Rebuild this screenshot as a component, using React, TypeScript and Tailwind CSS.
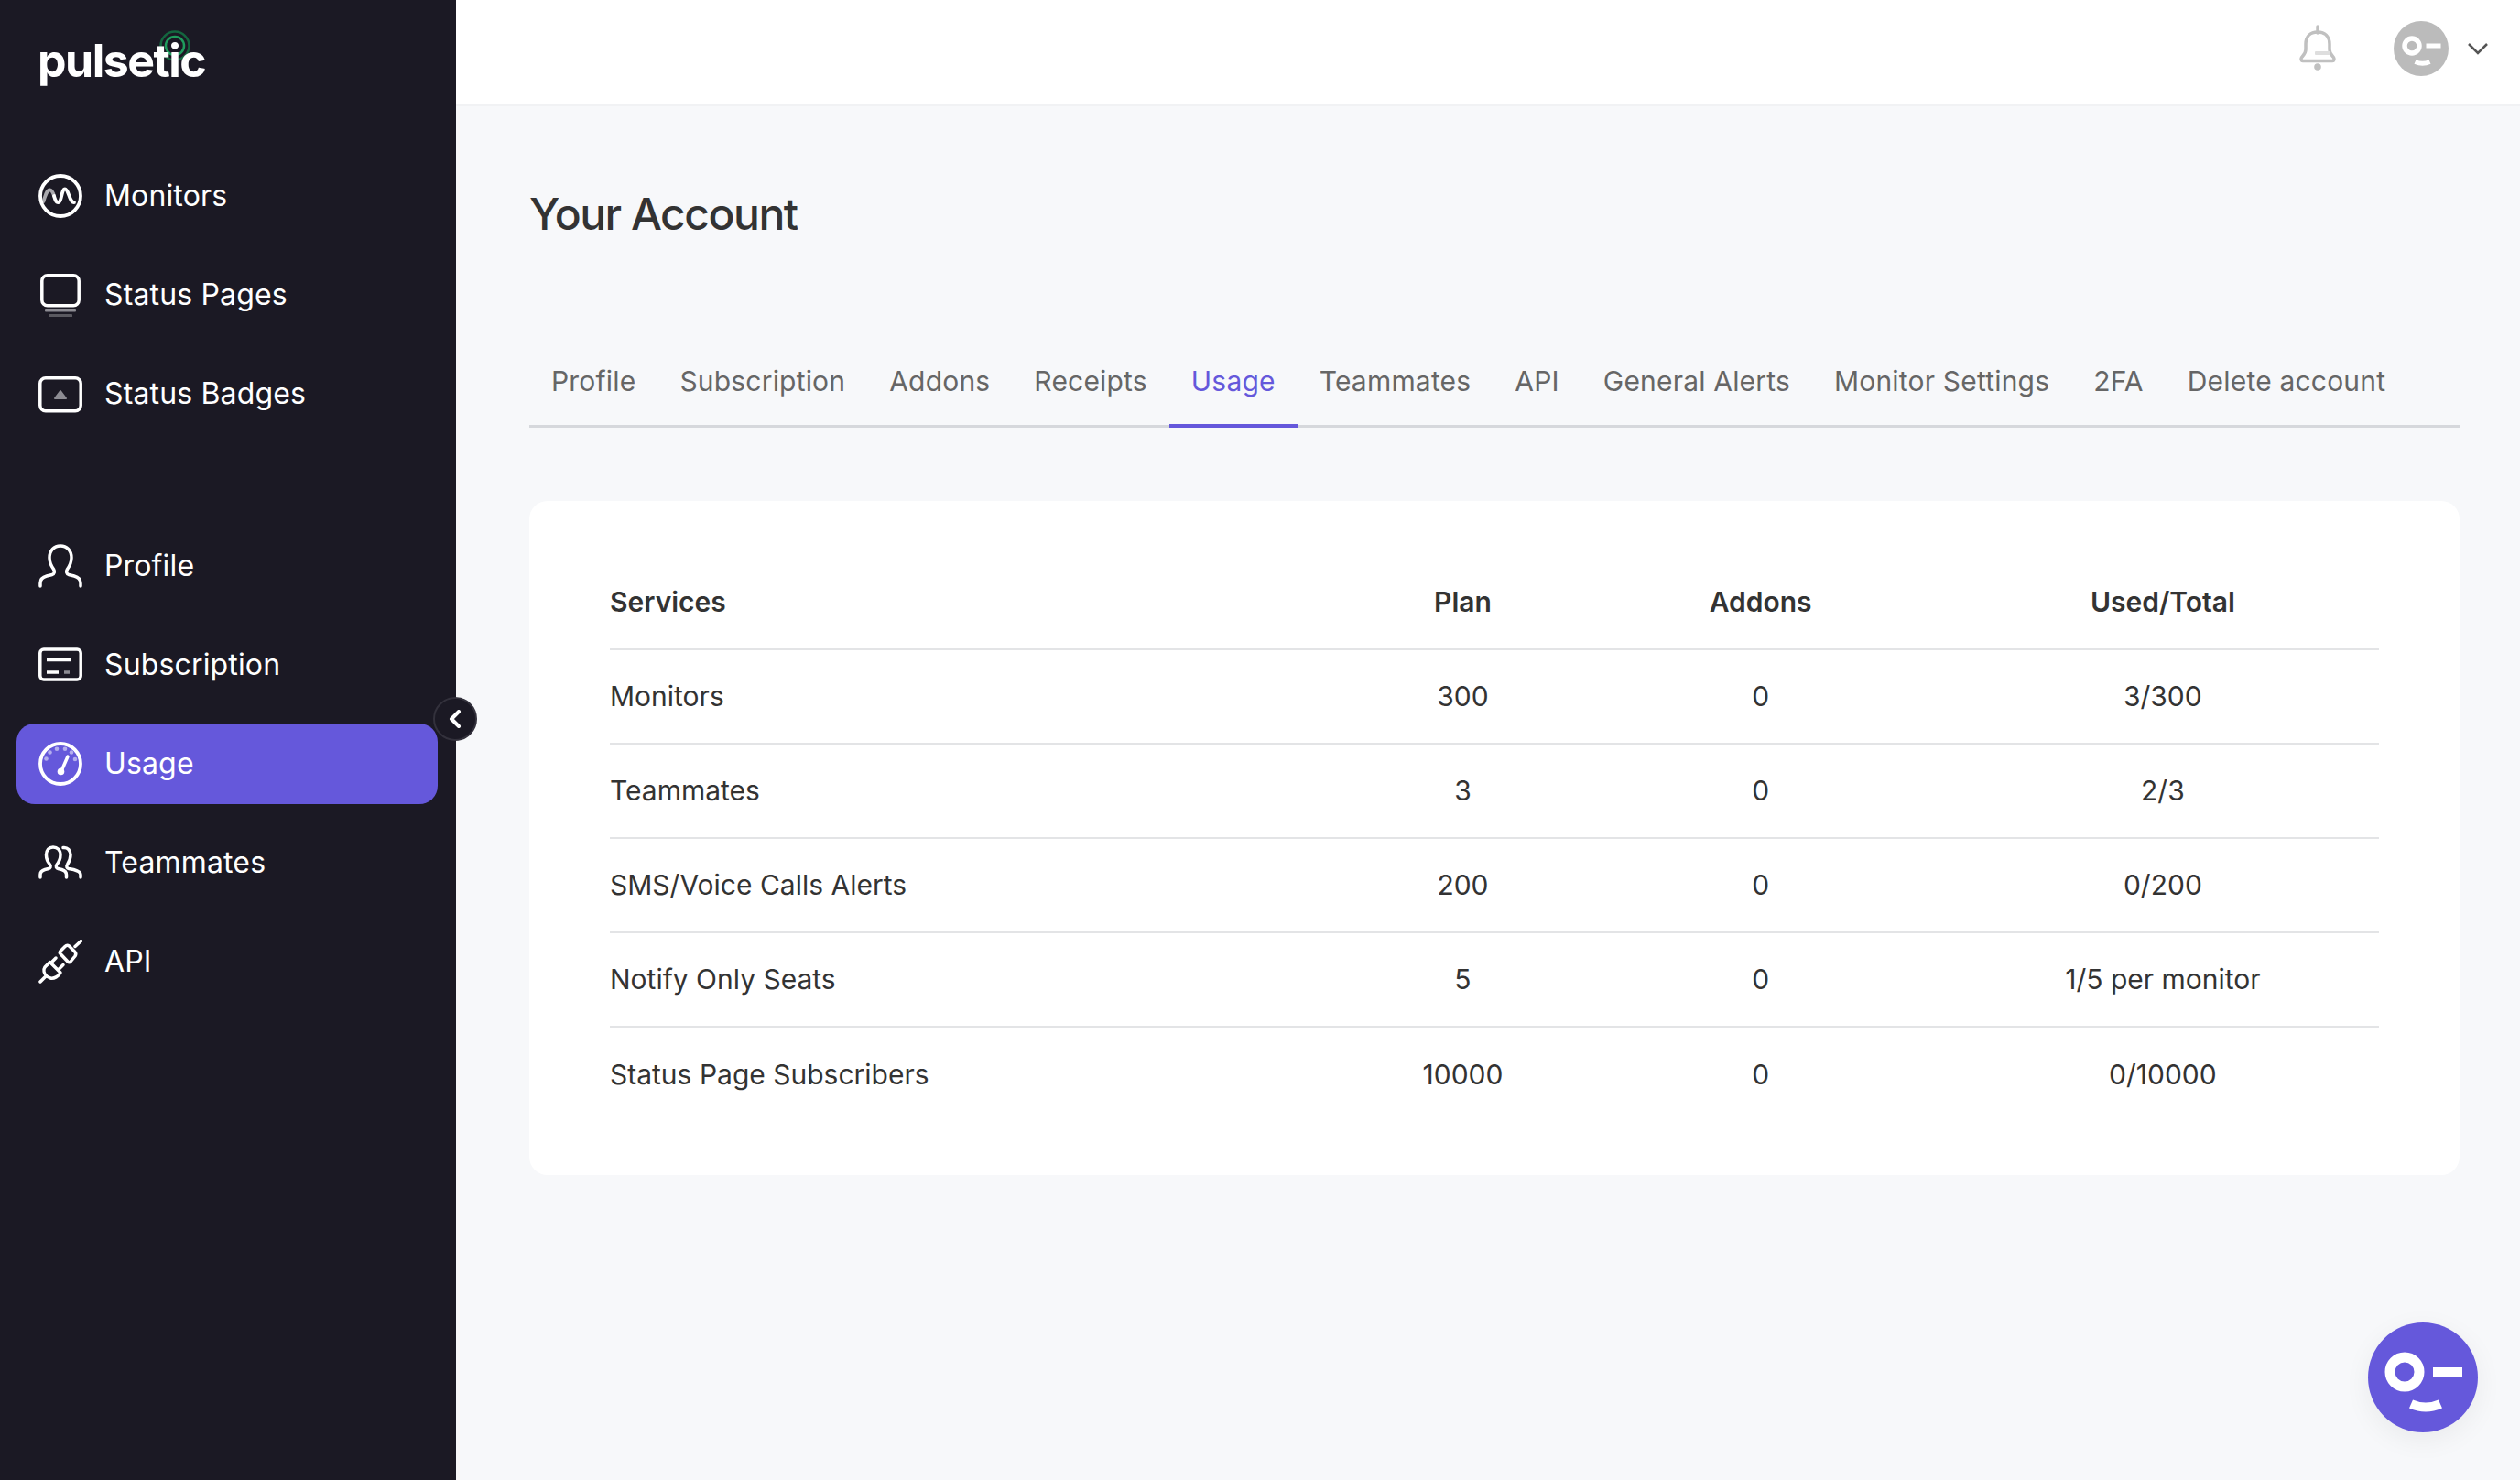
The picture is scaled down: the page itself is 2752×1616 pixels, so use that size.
import React from 'react';

const navTop = [
  { label: 'Monitors', icon: <MonitorIcon /> },
  { label: 'Status Pages', icon: <PagesIcon /> },
  { label: 'Status Badges', icon: <BadgeIcon /> },
];

const navBottom = [
  { label: 'Profile', icon: <ProfileIcon /> },
  { label: 'Subscription', icon: <CardIcon /> },
  { label: 'Usage', icon: <GaugeIcon />, active: true },
  { label: 'Teammates', icon: <TeamIcon /> },
  { label: 'API', icon: <PlugIcon /> },
];

const tabs = ['Profile', 'Subscription', 'Addons', 'Receipts', 'Usage', 'Teammates', 'API', 'General Alerts', 'Monitor Settings', '2FA', 'Delete account'];

const rows = [
  ['Monitors', '300', '0', '3/300'],
  ['Teammates', '3', '0', '2/3'],
  ['SMS/Voice Calls Alerts', '200', '0', '0/200'],
  ['Notify Only Seats', '5', '0', '1/5 per monitor'],
  ['Status Page Subscribers', '10000', '0', '0/10000'],
];

function MonitorIcon() {
  return (
    <svg width="48" height="48" viewBox="0 0 48 48" fill="none" strokeWidth="3.8" strokeLinecap="round">
      <path d="M5.500 30C7.500 23 9 17.500 12.500 17.500C15 17.500 16 21 17 24" stroke="#a9a8ad" />
      <path d="M17 24C18 27.500 19 31 21.500 31C25.500 31 25 16.500 29 16.500C33 16.500 33.500 31 39 31" stroke="#fff" />
      <circle cx="24" cy="24" r="22" stroke="#fff" />
    </svg>
  );
}

function PagesIcon() {
  return (
    <svg width="48" height="48" viewBox="0 0 48 48" fill="none">
      <rect x="3.800" y="2.800" width="40.400" height="33" rx="6" stroke="#fff" strokeWidth="3.500" />
      <rect x="7" y="39" width="34" height="3.500" rx="1" fill="#8d8c93" />
      <rect x="11" y="45" width="26" height="3.500" rx="1" fill="#5a5960" />
    </svg>
  );
}

function BadgeIcon() {
  return (
    <svg width="48" height="48" viewBox="0 0 48 48" fill="none">
      <rect x="1.800" y="6.800" width="44.400" height="36" rx="6" stroke="#fff" strokeWidth="3.500" />
      <path d="M24 21L30 29H18Z" fill="#8d8c93" stroke="#8d8c93" strokeWidth="2" strokeLinejoin="round" />
    </svg>
  );
}

function ProfileIcon() {
  return (
    <svg width="48" height="48" viewBox="0 0 48 48" fill="none" stroke="#fff" strokeWidth="3.500" strokeLinecap="round" strokeLinejoin="round">
      <path d="M2 46V43C2 38 5 36 9 35L15 33.500C17.500 32.500 18 30 16.500 27.500C14 24 12 20 12 15C12 7 17 2 24 2C31 2 36 7 36 15C36 20 34 24 31.500 27.500C30 30 30.500 32.500 33 33.500L39 35C43 36 46 38 46 43V46" />
    </svg>
  );
}

function CardIcon() {
  return (
    <svg width="48" height="48" viewBox="0 0 48 48" fill="none">
      <rect x="1.800" y="7" width="44.400" height="33" rx="4" stroke="#fff" strokeWidth="3.500" />
      <path d="M9 18.500H35" stroke="#fff" strokeWidth="3.500" />
      <path d="M9 32H22" stroke="#fff" strokeWidth="3.500" />
      <path d="M28 32H34" stroke="#8d8c93" strokeWidth="3.500" />
    </svg>
  );
}

function GaugeIcon() {
  return (
    <svg width="48" height="48" viewBox="0 0 48 48" fill="none">
      <circle cx="24" cy="24" r="22" stroke="#fff" strokeWidth="3.800" />
      <g fill="#b4aeee">
        <circle cx="8.500" cy="18.500" r="2.300" />
        <circle cx="12.500" cy="11.500" r="2.300" />
        <circle cx="20" cy="7.800" r="2.300" />
        <circle cx="29" cy="7.800" r="2.300" />
        <circle cx="36" cy="11.500" r="2.300" />
        <circle cx="40" cy="19" r="2.300" />
      </g>
      <path d="M25 32L32 16" stroke="#fff" strokeWidth="3.500" strokeLinecap="round" />
      <circle cx="24.500" cy="32.500" r="3.800" fill="#fff" />
    </svg>
  );
}

function TeamIcon() {
  return (
    <svg width="48" height="48" viewBox="0 0 48 48" fill="none" stroke="#fff" strokeWidth="3.500" strokeLinecap="round" strokeLinejoin="round">
      <path d="M2 40V37C2 34 4 32.500 7 31.500L11 30.500C13 30 14 28 12.500 26C10 23 8.500 19 8.500 15.500C8.500 10 11.500 7 16 7C20.500 7 24 10 24 15.500C24 19 22.500 23 20 26C18.500 28 19.500 30 21.500 30.500L25.500 31.500C28.500 32.500 30.500 34 30.500 37V40" />
      <path d="M27 7.500C32 7 35 10.500 35 15.500C35 19 33.500 23 31.500 26C30 28 31 30 33 30.500L38.500 31.500C42 32.500 46 34 46 37V40" />
    </svg>
  );
}

function PlugIcon() {
  return (
    <svg width="48" height="48" viewBox="0 0 48 48" fill="none" stroke="#fff" strokeWidth="3.500" strokeLinecap="round" strokeLinejoin="round">
      <path d="M46.500 1.500L40 7.500" />
      <path d="M23.500 13L29 7.500C30.500 6 32 6 33.500 7L39.500 13C41 14.500 41 16.500 40 18L35 24C34 25 33 25 32 24L24 15.500C23 14.500 23 14 23.500 13Z" />
      <path d="M12.500 24.500L24 36C22 40 17 43 13 42L9 40C6 37 5 33 7 30Z" />
      <path d="M2 46L7.500 40.500" />
      <path d="M14.500 24.500L19 20M22.500 32L27 27.500" />
    </svg>
  );
}

function BellIcon() {
  return (
    <svg width="40" height="50" viewBox="0 0 40 50" fill="none">
      <path d="M20 2V9" stroke="#c0c0c0" strokeWidth="3.500" strokeLinecap="round" />
      <path d="M2 37C2 34.500 7 33 7 27V21C7 13 12 8 20 8C28 8 33 13 33 21V27C33 33 38 34.500 38 37C38 38.500 37 39.500 36 39.500H4C3 39.500 2 38.500 2 37Z" stroke="#c0c0c0" strokeWidth="3.500" strokeLinejoin="round" />
      <rect x="17" y="29" width="17" height="4" rx="1" fill="#dedede" />
      <circle cx="20" cy="46" r="3.800" fill="#c0c0c0" />
    </svg>
  );
}

function FaceIcon({ size, color }: { size: number; color: string }) {
  return (
    <svg width={size} height={size} viewBox="0 0 120 120">
      <circle cx="60" cy="60" r="60" fill={color} />
      <circle cx="40" cy="54" r="16" fill="none" stroke="#fff" strokeWidth="11" />
      <rect x="71" y="49" width="32" height="10" fill="#fff" />
      <path d="M47 89Q63 96 79 89" fill="none" stroke="#fff" strokeWidth="10" />
    </svg>
  );
}

function NavItem({ label, icon, active }: { label: string; icon: React.ReactNode; active?: boolean }) {
  return (
    <a className={`flex items-center h-[88px] pl-6 gap-6 rounded-[20px] text-[32px] tracking-[0.15px] text-white ${active ? 'bg-[#6558db]' : ''}`}>
      <span className="w-12 h-12 shrink-0">{icon}</span>
      {label}
    </a>
  );
}

export default function App() {
  return (
    <div className="flex h-[1616px] overflow-hidden bg-[#f7f8fa] font-['Inter',sans-serif]">
      {/* Sidebar */}
      <aside className="relative w-[498px] shrink-0 bg-[#1b1924] pl-[18px] pr-5">
        <div className="relative mt-[28px] ml-[23px] h-[142px]">
          <svg className="absolute left-[128px] top-[3px]" width="44" height="44" viewBox="0 0 44 44" fill="none">
            <circle cx="22" cy="19" r="15.500" stroke="#14663f" strokeWidth="2.500" />
            <circle cx="22" cy="19" r="10" stroke="#1f9d5d" strokeWidth="2.500" />
          </svg>
          <span className="relative block text-[50px] leading-[62px] pt-[7px] font-bold tracking-[-1.5px] text-white">pulsetic</span>
        </div>

        <nav className="flex flex-col gap-5">
          {navTop.map((item) => (
            <NavItem key={item.label} {...item} />
          ))}
        </nav>

        <nav className="flex flex-col gap-5 mt-[100px]">
          {navBottom.map((item) => (
            <NavItem key={item.label} {...item} />
          ))}
        </nav>

        <button className="absolute left-[473px] top-[761px] w-12 h-12 flex items-center justify-center rounded-full bg-[#1b1924] border-2 border-[#33313c]">
          <svg width="14" height="20" viewBox="0 0 14 20" fill="none">
            <path d="M11 2L3 10L11 18" stroke="#fff" strokeWidth="4" strokeLinecap="round" strokeLinejoin="round" />
          </svg>
        </button>
      </aside>

      {/* Main */}
      <div className="flex-1 min-w-0">
        <header className="flex items-center justify-end h-[116px] bg-white border-b-2 border-[#f1f2f4] pr-[34px]">
          <span className="mr-[63px] mt-[-10px] flex">
            <BellIcon />
          </span>
          <span className="mt-[-8px] flex">
            <FaceIcon size={60} color="#bbbbbb" />
          </span>
          <svg className="ml-5 mt-[-8px]" width="24" height="14" viewBox="0 0 24 14" fill="none">
            <path d="M2 2L12 12L22 2" stroke="#555" strokeWidth="2.500" />
          </svg>
        </header>

        <main className="pl-20 pr-[66px]">
          <h1 className="mt-[87px] text-[48px] leading-[62px] font-medium tracking-[-1.5px] text-[#333]">Your Account</h1>

          <div className="flex mt-[106px] h-[96px] border-b-[3px] border-[#d6d8dc]">
            {tabs.map((tab) => (
              <a
                key={tab}
                className={`h-[96px] pb-[2px] px-6 flex items-center text-[30px] tracking-[0.19px] border-b-4 ${tab === 'Usage' ? 'text-[#6558db] border-[#6558db]' : 'text-[#666] border-transparent'}`}
              >
                {tab}
              </a>
            ))}
          </div>

          <section className="mt-[80px] rounded-[20px] bg-white px-[88px] pt-[60px] h-[736px]">
            <table className="w-full table-fixed text-[30px] text-[#333]">
              <colgroup>
                <col className="w-[809px]" />
                <col className="w-[244px]" />
                <col className="w-[406px]" />
                <col className="w-[472px]" />
              </colgroup>
              <thead>
                <tr className="h-[102px] border-b-2 border-[#e3e4e6]">
                  <th className="text-left font-semibold">Services</th>
                  <th className="text-center font-semibold">Plan</th>
                  <th className="text-center font-semibold">Addons</th>
                  <th className="text-center font-semibold">Used/Total</th>
                </tr>
              </thead>
              <tbody>
                {rows.map((row, i) => (
                  <tr key={row[0]} className={`h-[103px] ${i < rows.length - 1 ? 'border-b-2 border-[#e3e4e6]' : ''}`}>
                    <td className="text-left">{row[0]}</td>
                    <td className="text-center">{row[1]}</td>
                    <td className="text-center">{row[2]}</td>
                    <td className="text-center">{row[3]}</td>
                  </tr>
                ))}
              </tbody>
            </table>
          </section>
        </main>
      </div>

      {/* Chat widget */}
      <button className="fixed left-[2586px] top-[1444px] rounded-full shadow-[0_8px_30px_rgba(0,0,0,0.06)]">
        <FaceIcon size={120} color="#6558db" />
      </button>
    </div>
  );
}
